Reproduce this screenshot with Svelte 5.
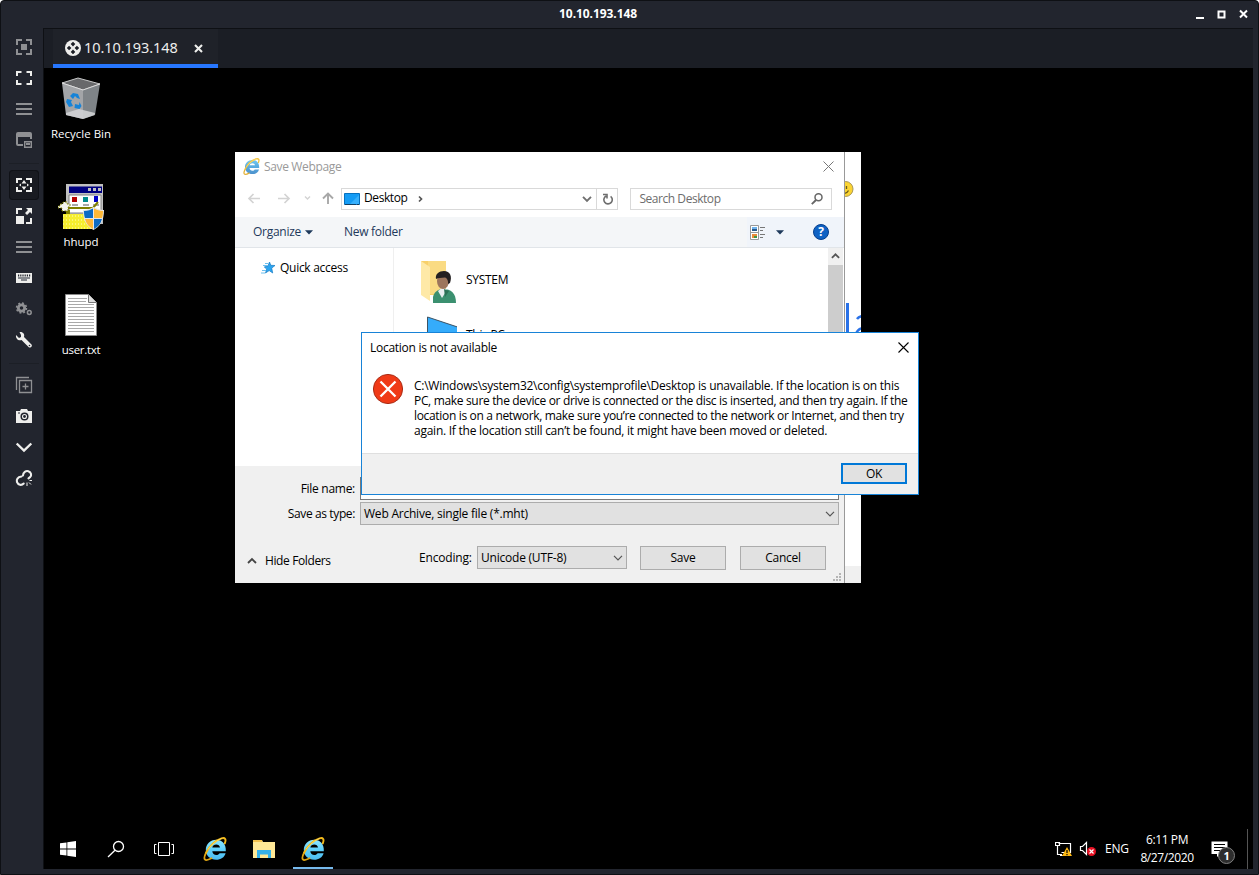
<script>
  const lines = [
    'C:\\Windows\\system32\\config\\systemprofile\\Desktop is unavailable. If the location is on this',
    'PC, make sure the device or drive is connected or the disc is inserted, and then try again. If the',
    'location is on a network, make sure you’re connected to the network or Internet, and then try',
    'again. If the location still can’t be found, it might have been moved or deleted.'
  ];
  const tools = ['fit', 'full', 'menu', 'multi', 'sep', 'dynamic', 'scale', 'menu', 'keyboard', 'gears', 'wrench', 'sep', 'duplicate', 'camera', 'down', 'unlink'];
  const dim = ['fit', 'menu', 'multi', 'gears', 'duplicate'];
</script>

{#snippet ie(size, id, pale)}
  <svg width={size} height={size} viewBox="0 0 24 24" opacity={pale ? 0.85 : 1}>
    <defs>
      <linearGradient id={id} x1="0" y1="0" x2="0" y2="1">
        <stop offset="0" stop-color={pale ? '#5bc0ee' : '#8fe6ff'} />
        <stop offset=".5" stop-color={pale ? '#3b9bd9' : '#5fd0fa'} />
        <stop offset="1" stop-color={pale ? '#2f7fc4' : '#4cbcf2'} />
      </linearGradient>
    </defs>
    <path d="M8 14.200H22.800C23.400 7 19 2.700 13.200 2.700 7.200 2.700 2.800 7.200 2.800 12.800c0 5.800 4.300 9.900 10.400 9.900 4.600 0 8.200-2.300 9.400-6.500H16.600c-.7 1.200-1.800 1.800-3.200 1.800-2.300 0-3.900-1.400-4.100-3.800zM9.300 10.400c.4-1.900 1.900-3 3.900-3s3.500 1.100 3.800 3z" fill="url(#{id})" fill-rule="evenodd" />
    <path d="M3.200 15.500C-.5 22.500 1.500 25 8.500 21.300" fill="none" stroke="#dda313" stroke-width="1.800" stroke-linecap="round" />
    <path d="M3.200 15.500C6.500 8.500 13 3 18.500 1.300c3.800-1.100 4.900 1 3.300 5" fill="none" stroke="#f2b91c" stroke-width="1.900" stroke-linecap="round" />
    <path d="M5 12.500C8.500 7.500 14 3 18.800 1.500" fill="none" stroke="#ffe36c" stroke-width=".8" />
  </svg>
{/snippet}

{#snippet chevron(w, color, sw)}
  <svg width={w} height="8" viewBox="0 0 10 8"><path d="M1 1.800 5 5.800 9 1.800" fill="none" stroke={color} stroke-width={sw} /></svg>
{/snippet}

<div class="frame">
  <header class="caption">
    <span class="host">10.10.193.148</span>
    <svg class="controls" width="56" height="14" viewBox="0 0 56 14" fill="none" stroke="#fff" stroke-width="2">
      <path d="M2 11h8M46 3.500l7 7M53 3.500l-7 7" /><path d="M24.500 4.500h6v6h-6z" stroke-width="2" />
    </svg>
  </header>
  <div class="main">
    <nav class="tools">
      {#each tools as t}
        {#if t === 'sep'}
          <div class="sep"></div>
        {:else}
          <div class="tool" class:active={t === 'dynamic'}>
            <svg width="18" height="18" viewBox="0 0 18 18" style:color={dim.includes(t) ? '#8f9093' : '#eeeeec'} fill="none" stroke="currentColor" stroke-width="2">
              {#if t === 'fit'}
                <path d="M2 7V2h5M11 2h5v5M16 11v5h-5M7 16H2v-5" /><path d="M6 6h6v6H6z" fill="currentColor" stroke="none" />
              {:else if t === 'full'}
                <path d="M2 7V3h4.500M11.500 3H16v4M16 11v4h-4.500M6.500 15H2v-4" />
              {:else if t === 'menu'}
                <path d="M1 4h16M1 9h16M1 14h16" />
              {:else if t === 'multi'}
                <path d="M1 3q0-2 2-2h12q2 0 2 2v5H8v7H3q-2 0-2-2z" fill="currentColor" stroke="none" /><path d="M3 6h12v2H8v5H3z" fill="#22252e" stroke="none" /><path d="M9.700 10.700h6.600v5.600H9.700z" stroke-width="1.400" /><path d="M11 12h4v2h-4z" fill="currentColor" stroke="none" />
              {:else if t === 'dynamic'}
                <path d="M2 7V3h5M11 3h5v4M16 11v4h-5M7 15H2v-4" /><path d="M9 4 11.500 7.500h-5zM9 14l2.500-3.500h-5zM4 9 6 7.500v3zM14 9l-2-1.500v3z" fill="currentColor" stroke="none" />
              {:else if t === 'scale'}
                <path d="M2 7V2h5M16 11v5h-5" /><path d="M1 9h8v8H1zM11 1h6v6l-2-2-3 3-2-2 3-3z" fill="currentColor" stroke="none" />
              {:else if t === 'keyboard'}
                <path d="M1 4h16v10H1z" fill="currentColor" stroke="none" /><path d="M3 6.500h13" stroke="#22252e" stroke-dasharray="1.200 1" /><path d="M3 9h12M6 11h6" stroke="#666970" stroke-width="1.500" />
              {:else if t === 'gears'}
                <circle cx="6.500" cy="8" r="3.200" stroke-width="2.800" /><circle cx="6.500" cy="8" r="5" stroke-width="1.500" stroke-dasharray="1.950 1.970" /><circle cx="14.300" cy="12.500" r="1.900" stroke-width="1.500" />
              {:else if t === 'wrench'}
                <path d="M4.500 1C8 .5 10 3 9 6l7.500 7.500c1.300 1.500-1 4-2.700 2.700L6.500 9C3.500 10 .5 8 1 4l3 3 2-1V4z" fill="currentColor" stroke="none" /><circle cx="14.500" cy="14.500" r=".8" fill="#22252e" stroke="none" />
              {:else if t === 'duplicate'}
                <path d="M4.500 4.500h12v12h-12zM14 1.500H1.500V14M10.500 7.500v6M7.500 10.500h6" stroke-width="1.300" />
              {:else if t === 'camera'}
                <path d="M1 4h4l1-2h6l1 2h4v12H1z" fill="currentColor" stroke="none" /><circle cx="9.500" cy="9.500" r="3.300" stroke="#22252e" stroke-width="1.500" /><circle cx="9.500" cy="9.500" r="1.400" fill="#22252e" stroke="none" /><path d="M3 6h2" stroke="#22252e" stroke-width="1.200" />
              {:else if t === 'down'}
                <path d="M1.700 5.500 9 12.500l7.300-7" stroke-width="2.400" />
              {:else if t === 'unlink'}
                <path d="M8 6.500C8 3 11 1.600 13.300 2.200c3 1 3.700 4.300 1.700 6L13.500 9.300M6.500 7.500C2.500 8 1.200 10.500 2 13.200c1.200 2.900 4.500 3.600 6.700 1.300" stroke-width="2.100" stroke-linecap="round" /><path d="M12 13.500v3.500M14 13.500l2 2M14.500 11.500H17" stroke-width="1" />
              {/if}
            </svg>
          </div>
        {/if}
      {/each}
    </nav>
    <section class="session">
      <div class="tabs">
        <div class="tab">
          <svg width="16" height="16" viewBox="0 0 16 16"><circle cx="8" cy="8" r="8" fill="#eeeeec" /><g fill="#1b1e25"><path d="m8 1.800 2.300 2.300L8 6.400 5.700 4.100zM8 9.600l2.300 2.300L8 14.200l-2.300-2.300zM4.100 5.700 6.400 8l-2.300 2.300L1.800 8zM11.900 5.700 14.200 8l-2.300 2.300L9.600 8z" /></g></svg>
          <span class="tabname">10.10.193.148</span>
          <svg width="9" height="9" viewBox="0 0 9 9"><path d="m1 1 7 7M8 1 1 8" stroke="#eeeeec" stroke-width="2.100" /></svg>
        </div>
      </div>

      <div class="desktop">
        <div class="shortcuts">
          <div class="shortcut">
            <div class="pic">
              <svg width="40" height="44" viewBox="0 0 40 44">
                <path d="M1 6 17 1l22 6-17 6z" fill="#68696b" stroke="#c7c8c8" />
                <path d="M1 6l21 7v29L5 38z" fill="#a3a5a8" /><path d="M22 13 39 7l-5 31-12 4z" fill="#7f8488" />
                <path d="m5 36 13-4 16 4-.5 2L22 42 5 38z" fill="#d0d2d4" opacity=".9" /><path d="M1 6l21 7 17-6" fill="none" stroke="#dcdcdc" />
                <g fill="#1583d8"><path d="m9 19 3-3 5 1 2 5-3-1-2-2-2 3zM6 22l5 1-1 2 2 4-4 1-3-5zM14 27l4 1 .5-3 2 4-2 3-5-1z" /></g>
              </svg>
            </div><span>Recycle Bin</span>
          </div>
          <div class="shortcut">
            <div class="pic">
              <svg width="46" height="48" viewBox="0 0 46 48">
                <path d="M8 1h37v40H8z" fill="#c0c0c0" /><path d="M11 3.500h33V10H11z" fill="#000080" /><path d="M30 5h3v3h-3zM35 5h3v3h-3zM40 5h3v3h-3z" fill="#c0c0c0" />
                <path d="M11 12h32v18H11z" fill="#fff" stroke="#808080" /><path d="M14 14h5v5h-5z" fill="#b40000" /><path d="M25 14h5v5h-5z" fill="#008b8b" /><path d="M36 13h4v6h-4z" fill="#0000c8" />
                <path d="M14 22h6M25 22h6M35 22h6" stroke="#555" /><path d="M8 25h27l5-6" stroke="#808000" stroke-width="2" fill="none" />
                <path d="M5 31h31v15H5z" fill="#f6ee2e" /><path d="M5 33h31M5 37h31M5 41h31M5 45h31" stroke="#fffbc0" stroke-dasharray="1 2" /><path d="M8 27h4v4H8z" fill="#808000" />
                <path d="M2 21h3v-2h4v2h3v3h-2v4H4v-3H0v-2h2z" fill="#f4f4f0" stroke="#808000" stroke-dasharray="2 1.500" />
                <path d="M25 27c5 0 8-2 10.500-3 3 1.500 6 3 10.500 3 0 11-4 16.500-10.500 20C29 43.500 25 38 25 27z" fill="#e8e8e8" />
                <path d="M26 28c4 0 7-1.500 9-2.500V35h-8c-.7-2-1-4-1-7zM36 36h8c-1.500 5-4 8-8 10z" fill="#0c6ac4" /><path d="M36 25.500c3 1.500 5.500 2.500 9 2.500 0 3-.3 5-1 7h-8zM27 36h8v10c-4-2-6.500-5-8-10z" fill="#ffb938" />
              </svg>
            </div><span>hhupd</span>
          </div>
          <div class="shortcut">
            <div class="pic">
              <svg width="32" height="42" viewBox="0 0 32 42">
                <path d="M.5.5h23l8 8v33H.5z" fill="#fff" stroke="#8a8a8a" /><path d="M23.500.5v8h8" fill="#ddd" stroke="#777" />
                <path d="M3 4.500h19M3 7.500h18M3 10.500h26M3 13.500h26M3 16.500h26M3 19.500h26M3 22.500h26M3 25.500h26M3 28.500h26M3 31.500h26M3 34.500h26M3 37.500h26" stroke="#a9a9a9" />
              </svg>
            </div><span class="file">user.txt</span>
          </div>
        </div>

        <div class="browser">
          <svg class="peek" width="17" height="414" viewBox="0 0 17 414">
            <circle cx="1.500" cy="37" r="7.500" fill="#fbd432" stroke="#a89555" /><path d="M2.500 34v3M-2 40q4 3 6.500-1.500" stroke="#6b5a18" stroke-width="1.300" fill="none" />
            <path d="M3.500 151v35" stroke="#2a72e8" stroke-width="3" /><path d="M13 167q2-3 7-3M12 182q2-6 8-6" stroke="#2a72e8" stroke-width="2.500" fill="none" />
          </svg>
        </div>

        <div class="save">
          <div class="savetitle">{@render ie(17, 'ieSmall', true)}<span>Save Webpage</span>
            <svg class="close" width="11" height="11" viewBox="0 0 11 11"><path d="m.5.5 10 10M10.500.5l-10 10" stroke="#777" /></svg>
          </div>
          <div class="navrow">
            <svg width="94" height="16" viewBox="0 0 94 16" fill="none" stroke="#d3d3d3" stroke-width="1.700">
              <path d="M14 8.500H3M7.500 4 3 8.500 7.500 13M32 8.500h11M38.500 4l4.500 4.500-4.500 4.500" /><path d="m59 6.500 2.500 2.500L64 6.500" stroke-width="1.400" /><path d="M82 14V3.500M77 8.500l5-5 5 5" stroke="#a8a8a8" stroke-width="1.900" />
            </svg>
            <div class="address">
              <svg width="16" height="13" viewBox="0 0 16 13"><path d="M.5.5h15v11H.5z" fill="#149cf5" stroke="#0671bf" /><path d="M6 11 15 2v9z" fill="#37b0fc" /><path d="M1 11.500h14" stroke="#123e62" stroke-dasharray="11 1" /></svg>
              <span>Desktop</span>
              <svg class="crumb" width="6" height="8" viewBox="0 0 6 8"><path d="m1 1.500 2.500 2.500L1 6.500" stroke="#555" stroke-width="1.700" fill="none" /></svg>
              <i></i>{@render chevron(10, '#707070', 1.900)}
            </div>
            <div class="refresh"><svg width="12" height="12" viewBox="0 0 12 12"><path d="M8.600 3.300A4.200 4.200 0 1 1 4 3M1 1.500h4v4" fill="none" stroke="#6e6e6e" stroke-width="1.600" transform="translate(1 0)" /></svg></div>
            <div class="search"><span>Search Desktop</span><svg width="12" height="12" viewBox="0 0 12 12"><circle cx="7.500" cy="4.300" r="3.500" fill="none" stroke="#666" stroke-width="1.500" /><path d="M5 7 .8 11.200" stroke="#666" stroke-width="1.900" /></svg></div>
          </div>
          <div class="bar">
            <span class="org">Organize</span><svg width="8" height="5" viewBox="0 0 8 5"><path d="M0 .3h8L4 4.500z" fill="#1e395b" /></svg>
            <span class="newf">New folder</span><i></i>
            <div class="views">
              <svg width="16" height="15" viewBox="0 0 16 15"><path d="M.5.5h8v14h-8zM.5 7.500h8" fill="#fff" stroke="#999" /><path d="M2 2h5v2H2z" fill="#6db2ed" /><path d="M2 4h5v2H2z" fill="#29588b" /><path d="M2 9h5v4H2z" fill="#e98b3a" /><path d="M4 11h3v2H4z" fill="#409545" /><path d="M10 2.500h5M10 5.500h3M10 9.500h5M10 12.500h3" stroke="#777" /></svg>
              <svg width="8" height="5" viewBox="0 0 8 5"><path d="M0 .3h8L4 4.500z" fill="#1e395b" /></svg>
              <div class="help">?</div>
            </div>
          </div>
          <div class="files">
            <div class="tree">
              <svg width="15" height="14" viewBox="0 0 15 14"><path d="m8.500 1 1.300 3.300 4.200.2-3.300 2.600 1 4.900-3.500-2.400L4.500 12l1.200-3.900L3.300 6 7 4.800z" fill="#2ba4ef" stroke="#167bc4" stroke-width=".7" /><path d="M2 4.500h4M4 2.500h3M1 9.500h4M0 12h4" stroke="#6dbfee" /></svg>
              <span>Quick access</span>
            </div>
            <div class="list">
              <div class="item">
                <svg width="38" height="44" viewBox="0 0 38 44">
                  <path d="M2 1h25v34H9z" fill="#f8d06a" /><path d="M9 1h18v33H9z" fill="#fadb83" /><path d="M2 1l9 6v34L2 35z" fill="#fee9a7" />
                  <path d="M14 43v-6c1-5 5-8 10-8 8 0 13 4 13 14z" fill="#3b9070" /><path d="m19 31 4 7 5-8-4-3z" fill="#e8eef0" /><path d="m25 29 1 8 4-6z" fill="#2b7156" />
                  <ellipse cx="24" cy="21" rx="6" ry="8" fill="#9c755c" /><path d="M17 19c-1-5 3-8 8-8 6 0 8.500 5 6 12l-2 1c.5-3-1-6-3-6.500-4 .5-7 0-9 1.500z" fill="#231f20" />
                </svg><span class="sys">SYSTEM</span>
              </div>
              <div class="item pc">
                <svg width="38" height="40" viewBox="0 0 38 40"><path d="m8.500 1 30 10v20l-30 2z" fill="#35acfb" stroke="#3d5364" /></svg><span>This PC</span>
              </div>
            </div>
            <div class="scroll"><div class="up">{@render chevron(9, '#555', 2)}</div></div>
          </div>
          <div class="form">
            <div class="field"><label class="lf" for="fname">File name:</label><div class="input" id="fname"></div></div>
            <div class="field type"><span class="ls">Save as type:</span><div class="combo"><span>Web Archive, single file (*.mht)</span>{@render chevron(10, '#555', 1.200)}</div></div>
            <div class="actions">
              <svg class="hideicon" width="10" height="8" viewBox="0 0 10 8"><path d="m1 6 4-4 4 4" stroke="#444" stroke-width="1.800" fill="none" /></svg>
              <span class="hide">Hide Folders</span>
              <span class="enc">Encoding:</span>
              <div class="combo small"><span>Unicode (UTF-8)</span>{@render chevron(10, '#555', 1.200)}</div>
              <div class="btn">Save</div><div class="btn cancel">Cancel</div>
            </div>
          </div>
          <svg class="grip" width="9" height="9" viewBox="0 0 9 9" fill="#b5b5b5"><path d="M7 1h2v2H7zM7 4h2v2H7zM4 4h2v2H4zM7 7h2v2H7zM4 7h2v2H4zM1 7h2v2H1z" /></svg>
        </div>

        <div class="error">
          <div class="errtitle"><span>Location is not available</span><svg width="11" height="11" viewBox="0 0 11 11"><path d="m.5.5 10 10M10.500.5l-10 10" stroke="#000" stroke-width="1.100" /></svg></div>
          <div class="errbody">
            <svg width="32" height="32" viewBox="0 0 32 32"><circle cx="16" cy="16" r="14.600" fill="#f03a17" stroke="#a92c16" /><path d="m8.500 8.500 15 15M23.500 8.500l-15 15" stroke="#fff" stroke-width="2.300" /></svg>
            <div class="msg">{#each lines as l, i}<div class:tight={i === 1 || i === 2}>{l}</div>{/each}</div>
          </div>
          <div class="errfoot"><div class="ok">OK</div></div>
        </div>

        <footer class="taskbar">
          <div class="cell"><svg width="16" height="16" viewBox="0 0 16 16" fill="#fff"><path d="M0 2.300 6.500 1.400v6.200H0zM7.300 1.300 16 0v7.600H7.300zM0 8.400h6.500v6.200L0 13.700zM7.300 8.400H16V16l-8.700-1.200z" /></svg></div>
          <div class="cell"><svg width="18" height="18" viewBox="0 0 18 18" fill="none" stroke="#fff" stroke-width="1.300"><circle cx="11.500" cy="6.500" r="5" /><path d="M8 10.200 1 17" /></svg></div>
          <div class="cell"><svg width="20" height="16" viewBox="0 0 20 16" fill="none" stroke="#fff"><path d="M4.500 1.500h11v13h-11zM2.500 3.500h-2v9h2M17.500 3.500h2v9h-2" /></svg></div>
          <div class="cell wide">{@render ie(24, 'ieA', false)}</div>
          <div class="cell wide"><svg width="22" height="18" viewBox="0 0 22 18"><path d="M0 0h9l1 2h12v16H0z" fill="#ffe896" /><path d="M0 0h9v2H0z" fill="#f2c14e" /><path d="M4 18v-8h14v8h-3v-3.500H7V18z" fill="#35b1ea" /></svg></div>
          <div class="cell wide on">{@render ie(24, 'ieB', false)}</div>
          <i></i>
          <svg class="net" width="18" height="17" viewBox="0 0 18 17"><path d="M3.500 2.500h12v9h-9M.5 1.500h4v3h-4zM2.500 5v8.500H7M5 14.500h4" fill="none" stroke="#fff" stroke-width="1.200" /><path d="m12 6 5 9H7z" fill="#fdb913" /><path d="M12 9v3M12 13v1.200" stroke="#000" stroke-width="1.200" /></svg>
          <svg class="snd" width="18" height="16" viewBox="0 0 18 16"><path d="M1.500 5.500h2l4-4v12l-4-4h-2z" fill="none" stroke="#fff" stroke-width="1.200" /><circle cx="12.500" cy="10.500" r="4.500" fill="#e81123" /><path d="m10.500 8.500 4 4M14.500 8.500l-4 4" stroke="#fff" stroke-width="1.200" /></svg>
          <span class="eng">ENG</span>
          <div class="clock"><span>6:11 PM</span><span class="date">8/27/2020</span></div>
          <div class="notes"><svg width="17" height="16" viewBox="0 0 17 16"><path d="M.5.500h16V13H9l-3 3v-3H.500z" fill="#fff" /><path d="M3 3.500h11M3 6.500h11M3 9.500h7" stroke="#000" /></svg><b>1</b></div>
          <div class="peekbar"></div>
        </footer>
      </div>
    </section>
  </div>
</div>

<style>
  :global(body) { background: #fff; overflow: hidden; }
  * { box-sizing: border-box; }
  svg { display: block; flex: none; }
  span, label { white-space: nowrap; }
  i { flex: 1; }
  .frame { width: 1259px; height: 875px; background: #22252e; border: 1px solid #0e1014; border-radius: 4px 4px 0 0; display: flex; flex-direction: column; overflow: hidden; font: 12px/15px "Open Sans", "Noto Sans", sans-serif; letter-spacing: -0.280px; color: #000; }
  .caption { height: 27px; flex: none; display: flex; align-items: center; justify-content: flex-end; padding-right: 8px; }
  .host { flex: 1; padding-left: 558px; font: 700 12px/16px "Noto Sans", sans-serif; color: #fff; margin-top: -1px; letter-spacing: -0.050px; }
  .controls { margin-top: -2px; }
  .main { flex: 1; display: flex; min-height: 0; padding: 0 5px 5px 0; }
  .tools { width: 42px; padding: 4px 0 0 8px; display: flex; flex-direction: column; }
  .tool { width: 30px; height: 30px; margin-bottom: 1px; flex: none; display: flex; align-items: center; justify-content: center; border-radius: 4px; }
  .tool.active { background: #191b21; box-shadow: inset 0 0 0 1px #101217; }
  .sep { height: 1px; margin: 7px 0 6px; width: 30px; background: #1c1f26; flex: none; }
  .session { flex: 1; border-left: 1px solid #0e1014; border-top: 1px solid #0e1014; display: flex; flex-direction: column; min-width: 0; }
  .tabs { height: 39px; flex: none; background: #1b1e25; padding-left: 9px; display: flex; }
  .tab { width: 165px; border-bottom: 4px solid #2777ff; background: #1f2229; display: flex; align-items: center; padding: 3px 0 0 12px; }
  .tab > svg:first-child { margin-top: -1px; }
  .tabname { width: 109px; padding-left: 3px; margin-right: 4px; margin-top: -3px; font: 14.500px/20px "Noto Sans", sans-serif; color: #eeeeec; letter-spacing: -0.060px; }
  .desktop { flex: 1; background: #000; position: relative; display: flex; flex-direction: column; justify-content: space-between; min-height: 0; }
  .shortcuts { width: 74px; padding-top: 6px; }
  .shortcut { height: 108px; display: flex; flex-direction: column; align-items: center; color: #fff; font-size: 11.500px; letter-spacing: 0; }
  .file { letter-spacing: -0.300px; }
  .pic { height: 52px; display: flex; align-items: center; justify-content: center; padding-bottom: 2px; }

  .browser { position: absolute; left: 191px; top: 84px; width: 626px; height: 431px; background: linear-gradient(#fff 414px, #f0f0f0 414px); display: flex; justify-content: flex-end; }
  .save { position: absolute; left: 191px; top: 84px; width: 610px; height: 431px; background: #fff; border-right: 1px solid #999; display: flex; flex-direction: column; }
  .savetitle { height: 29px; display: flex; align-items: center; padding: 0 10px 0 8px; flex: none; color: #999; }
  .savetitle span { flex: 1; margin-left: 4px; letter-spacing: -0.350px; }
  .close { margin-bottom: 1px; }
  .navrow { height: 22px; margin: 7px 0 7px; flex: none; padding: 0 12px; display: flex; align-items: center; }
  .navrow > svg { margin-top: -2px; margin-left: -1px; margin-right: 1px; }
  .address { width: 257px; height: 22px; border: 1px solid #d9d9d9; display: flex; align-items: center; padding: 0 4px 0 2px; }
  .address span { margin-left: 4px; width: 54px; margin-top: -3px; letter-spacing: -0.400px; }
  .crumb { margin-top: -1px; }
  .refresh { width: 21px; height: 22px; border: 1px solid #d9d9d9; border-left: 0; display: flex; align-items: center; justify-content: center; }
  .search { margin-left: 12px; width: 202px; height: 22px; border: 1px solid #d9d9d9; display: flex; align-items: center; justify-content: space-between; padding: 0 8px 0 8px; color: #6d6d6d; letter-spacing: -0.450px; }
  .search span { margin-top: -1px; }
  .bar { height: 31px; flex: none; background: #f4f6f8; border-bottom: 1px solid #e1e5e9; display: flex; align-items: center; padding-left: 18px; color: #1e395b; }
  .bar span { margin-top: -1px; }
  .org { width: 52px; }
  .newf { margin-left: 31px; }
  .views { width: 97px; align-self: stretch; background: #f0f4fa; display: flex; align-items: center; padding-left: 3px; gap: 10px; }
  .help { width: 16px; height: 16px; margin-left: 19px; border-radius: 50%; background: #0f62c4; border: 1px solid #063f8d; color: #fff; font-weight: 700; font-size: 12px; line-height: 14px; text-align: center; }
  .files { height: 218px; flex: none; display: flex; overflow: hidden; }
  .tree { width: 159px; border-right: 1px solid #efefef; display: flex; padding: 13px 0 0 26px; height: 218px; }
  .tree span { margin-left: 4px; margin-top: -1px; }
  .list { flex: 1; padding: 12px 0 0 25px; }
  .item { height: 44px; display: flex; align-items: center; gap: 9px; margin-bottom: 10px; }
  .item span { padding: 0 0 6px 0; }
  .pc span { padding-bottom: 4px; }
  .scroll { width: 15px; background: linear-gradient(#f0f0f0 17px, #cdcdcd 17px 150px, #f0f0f0 150px); margin-right: 1px; }
  .up { height: 17px; display: flex; align-items: center; justify-content: center; transform: rotate(180deg); }
  .form { flex: 1; background: #f0f0f0; padding: 11px 5px 0 0; }
  .field { display: flex; align-items: center; height: 23px; }
  .type { margin-top: 2px; }
  .field label, .ls { width: 125px; text-align: right; padding-right: 5px; flex: none; }
  .field .ls { letter-spacing: -0.380px; }
  .input { width: 479px; height: 23px; background: #fff; border: 1px solid #7a7a7a; }
  .combo { width: 479px; height: 23px; background: #e1e1e1; border: 1px solid #acacac; display: flex; align-items: center; justify-content: space-between; padding: 0 3px 0 3px; letter-spacing: -0.220px; }
  .actions { display: flex; align-items: center; margin-top: 21px; height: 24px; }
  .hideicon { margin: 6px 0 0 12px; }
  .hide { margin: 5px 0 0 8px; width: 154px; letter-spacing: -0.380px; }
  .enc { width: 58px; flex: none; margin-top: -2px; letter-spacing: -0.180px; }
  .small { width: 150px; margin-bottom: 1px; }
  .btn { width: 86px; height: 24px; margin-left: 13px; background: #e1e1e1; border: 1px solid #acacac; text-align: center; line-height: 22px; }
  .cancel { margin-left: 14px; }
  .grip { position: absolute; right: 3px; bottom: 2px; }

  .error { position: absolute; left: 317px; top: 264px; width: 558px; height: 163px; background: #fff; border: 1px solid #1883d7; display: flex; flex-direction: column; }
  .errtitle { height: 30px; display: flex; align-items: center; justify-content: space-between; padding: 0 9px 1px 8px; }
  .errbody { height: 91px; display: flex; padding: 10px 0 0 10px; border-bottom: 1px solid #dfdfdf; }
  .msg { margin: 5px 0 0 10px; white-space: nowrap; letter-spacing: -0.250px; }
  .tight { letter-spacing: -0.330px; }
  .errfoot { flex: 1; background: #f0f0f0; display: flex; justify-content: flex-end; padding: 9px 11px 0 0; }
  .ok { width: 66px; height: 21px; border: 2px solid #0078d7; background: #e1e1e1; text-align: center; line-height: 17px; }

  .taskbar { height: 40px; display: flex; align-items: center; color: #fff; }
  .cell { width: 48px; height: 40px; display: flex; align-items: center; justify-content: center; }
  .wide { width: 49px; }
  .wide:nth-child(4) { margin-left: 2.500px; }
  .on { background: linear-gradient(#76b9ed, #76b9ed) 50% 100% / 40px 2px no-repeat; }
  .net { margin-right: 6px; }
  .eng { margin: -2px 0 0 8px; width: 36px; }
  .clock { width: 52px; display: flex; flex-direction: column; align-items: center; line-height: 18px; letter-spacing: -0.400px; }
  .notes { margin-left: 18px; width: 36px; position: relative; }
  .notes b { position: absolute; left: 7px; top: 6px; width: 17px; height: 17px; border-radius: 50%; background: #2d2d2d; border: 1px solid #808080; font-size: 11px; line-height: 15px; text-align: center; }
  .peekbar { width: 1px; height: 40px; background: #555; margin-right: 5px; }
</style>
